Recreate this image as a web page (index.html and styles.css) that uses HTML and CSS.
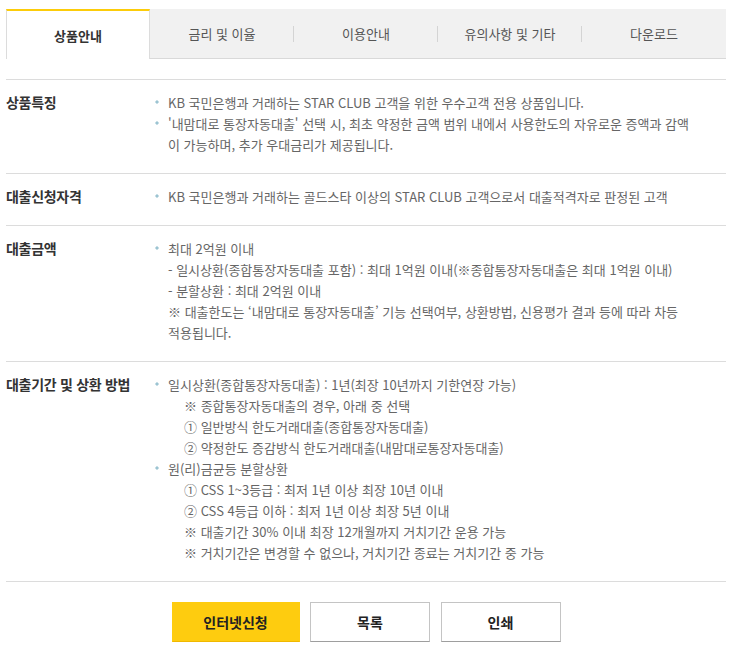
FILE: index.html
```html
<!DOCTYPE html>
<html lang="ko">

<head>
  <meta charset="UTF-8">
  <meta name="viewport" content="width=device-width, initial-scale=1.0">
  <title>상품안내</title>
  <link rel="stylesheet" href="styles.css">
</head>

<body>
  <div class="wrap">
    <ul class="tabs">
      <li class="tab on">상품안내</li>
      <li class="tab sep">금리 및 이율</li>
      <li class="tab sep">이용안내</li>
      <li class="tab sep">유의사항 및 기타</li>
      <li class="tab">다운로드</li>
    </ul>

    <div class="info">
      <div class="row">
        <div class="label">상품특징</div>
        <ul class="desc">
          <li>KB 국민은행과 거래하는 STAR CLUB 고객을 위한 우수고객 전용 상품입니다.</li>
          <li>'내맘대로 통장자동대출' 선택 시, 최초 약정한 금액 범위 내에서 사용한도의 자유로운 증액과 감액<br>이 가능하며, 추가 우대금리가 제공됩니다.</li>
        </ul>
      </div>

      <div class="row">
        <div class="label">대출신청자격</div>
        <ul class="desc">
          <li>KB 국민은행과 거래하는 골드스타 이상의 STAR CLUB 고객으로서 대출적격자로 판정된 고객</li>
        </ul>
      </div>

      <div class="row">
        <div class="label">대출금액</div>
        <ul class="desc">
          <li>최대 2억원 이내
            <p>- 일시상환(종합통장자동대출 포함) : 최대 1억원 이내(※종합통장자동대출은 최대 1억원 이내)</p>
            <p>- 분할상환 : 최대 2억원 이내</p>
            <p>※ 대출한도는 ‘내맘대로 통장자동대출’ 기능 선택여부, 상환방법, 신용평가 결과 등에 따라 차등<br>적용됩니다.</p>
          </li>
        </ul>
      </div>

      <div class="row">
        <div class="label">대출기간 및 상환 방법</div>
        <ul class="desc">
          <li>일시상환(종합통장자동대출) : 1년(최장 10년까지 기한연장 가능)
            <div class="sub">
              <p>※ 종합통장자동대출의 경우, 아래 중 선택</p>
              <p>① 일반방식 한도거래대출(종합통장자동대출)</p>
              <p>② 약정한도 증감방식 한도거래대출(내맘대로통장자동대출)</p>
            </div>
          </li>
          <li>원(리)금균등 분할상환
            <div class="sub">
              <p>① CSS 1~3등급 : 최저 1년 이상 최장 10년 이내</p>
              <p>② CSS 4등급 이하 : 최저 1년 이상 최장 5년 이내</p>
              <p>※ 대출기간 30% 이내 최장 12개월까지 거치기간 운용 가능</p>
              <p>※ 거치기간은 변경할 수 없으나, 거치기간 종료는 거치기간 중 가능</p>
            </div>
          </li>
        </ul>
      </div>
    </div>

    <div class="btns">
      <button class="btn apply">인터넷신청</button>
      <button class="btn">목록</button>
      <button class="btn">인쇄</button>
    </div>
  </div>
</body>

</html>
```

FILE: styles.css
```css
body {
  margin: 0;
  padding: 0;
  background-color: #fff;
  color: #666;
  font-family: "Noto Sans CJK KR", "Noto Sans", sans-serif;
  font-size: 13px;
}

ul,
p {
  margin: 0;
  padding: 0;
  list-style: none;
}

.wrap {
  width: 720px;
  margin-left: 6px;
  padding-top: 9px;
}

/* tabs */
.tabs {
  display: flex;
}

.tab {
  flex: 0 0 144px;
  height: 50px;
  box-sizing: border-box;
  display: flex;
  align-items: center;
  justify-content: center;
  background-color: #f1f1f1;
  border-bottom: 1px solid #d9d9d9;
  color: #555;
}

.tab.sep {
  background: linear-gradient(#d4d4d4, #d4d4d4) no-repeat right 17px / 1px 16px, #f1f1f1;
}

.tab.on {
  background-color: #fff;
  border-top: 2px solid #fccc0a;
  border-left: 1px solid #dcdcdc;
  border-right: 1px solid #dcdcdc;
  border-bottom: none;
  color: #333;
  font-weight: bold;
}

/* rows */
.info {
  margin-top: 20px;
  border-bottom: 1px solid #dcdcdc;
}

.row {
  display: flex;
  border-top: 1px solid #dcdcdc;
  padding: 12px 0 18px;
  line-height: 21px;
}

.label {
  width: 149px;
  flex-shrink: 0;
  color: #333;
  font-size: 14px;
  font-weight: bold;
  letter-spacing: -0.3px;
}

.desc {
  flex: 1;
}

.desc li {
  padding-left: 13px;
  background: radial-gradient(circle, #9cc4d2 1.4px, transparent 1.8px) no-repeat 0 8px / 4px 4px;
}

.sub {
  padding-left: 16px;
}

/* buttons */
.btns {
  display: flex;
  justify-content: center;
  gap: 10.5px;
  margin-top: 20px;
}

.btn {
  width: 120px;
  height: 40px;
  box-sizing: border-box;
  background-color: #fff;
  border: 1px solid #c4c4c4;
  border-bottom-color: #9e9e9e;
  color: #222;
  font-family: inherit;
  font-size: 14px;
  font-weight: bold;
  cursor: pointer;
}

.btn.apply {
  width: 128px;
  background-color: #fecc0f;
  border-color: #fecc0f;
  border-bottom-color: #f0b800;
}
```
